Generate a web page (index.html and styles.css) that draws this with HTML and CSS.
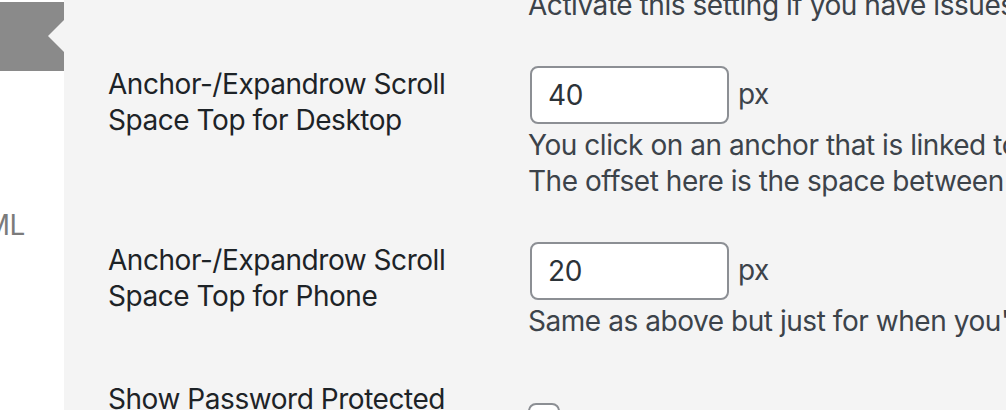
FILE: index.html
```html
<!DOCTYPE html>
<html lang="en">
<head>
<meta charset="utf-8">
<title>Settings</title>
<link rel="stylesheet" href="styles.css">
</head>
<body>
<div class="page">
  <aside class="sidebar">
    <div class="menu-current"></div>
    <div class="menu-item"><span class="menu-label">HTML</span></div>
  </aside>
  <main class="content">
    <div class="form-table">
      <div class="row row-prev">
        <div class="th"></div>
        <div class="td">
          <p class="description first">Activate this setting if you have issues with the scrolling on your page.</p>
        </div>
      </div>
      <div class="row">
        <div class="th">Anchor-/Expandrow Scroll<br>Space Top for Desktop</div>
        <div class="td">
          <div class="field">
            <input class="text-input" type="text" value="40">
            <span class="unit">px</span>
          </div>
          <p class="description">You click on an anchor that is linked to an element on the same page.<br>The offset here is the space between the top of the window and the element.</p>
        </div>
      </div>
      <div class="row">
        <div class="th">Anchor-/Expandrow Scroll<br>Space Top for Phone</div>
        <div class="td">
          <div class="field">
            <input class="text-input" type="text" value="20">
            <span class="unit">px</span>
          </div>
          <p class="description">Same as above but just for when you're on a phone.</p>
        </div>
      </div>
      <div class="row">
        <div class="th">Show Password Protected<br>Pages</div>
        <div class="td">
          <input class="checkbox" type="checkbox">
        </div>
      </div>
    </div>
  </main>
</div>
</body>
</html>
```
FILE: styles.css
```css
html, body {
  margin: 0;
  padding: 0;
}
body {
  width: 1006px;
  height: 410px;
  overflow: hidden;
  font-family: Inter, "Noto Sans", sans-serif;
  font-size: 28px;
  line-height: 36.6px;
  letter-spacing: -0.45px;
}
.page {
  display: flex;
  height: 410px;
  overflow: hidden;
}
.sidebar {
  width: 64px;
  flex-shrink: 0;
  background: #ffffff;
  overflow: hidden;
}
.menu-current {
  margin-top: 2px;
  height: 69px;
  background: #8a8a8a;
  position: relative;
}
.menu-current::after {
  content: "";
  position: absolute;
  right: 0;
  top: 18px;
  width: 0;
  height: 0;
  border-top: 16px solid transparent;
  border-bottom: 16px solid transparent;
  border-right: 16px solid #f4f4f4;
}
.menu-item {
  margin-top: 136px;
  width: 25px;
  display: flex;
  justify-content: flex-end;
  white-space: nowrap;
  color: #7b7b7b;
}
.content {
  flex: 1;
  background: #f4f4f4;
  padding-left: 44px;
  overflow: hidden;
}
.form-table {
  margin-top: -13px;
}
.row {
  display: grid;
  grid-template-columns: 420px 1fr;
}
.th {
  padding: 21px 0 0;
  color: #1d2327;
  white-space: nowrap;
}
.row-prev .th {
  padding: 0;
}
.td {
  padding: 21px 0 21px;
  min-width: 0;
}
.row-prev .td {
  padding-top: 0;
}
.field {
  display: flex;
  align-items: center;
}
.text-input {
  width: 199px;
  height: 58px;
  box-sizing: border-box;
  margin: 0 0 0 2px;
  padding: 0 16px;
  border: 2px solid #8c8f94;
  border-radius: 8px;
  background: #ffffff;
  font-family: Inter, "Noto Sans", sans-serif;
  font-size: 28px;
  letter-spacing: -0.45px;
  color: #2c3338;
  outline: none;
}
.unit {
  margin-left: 9px;
  color: #3c434a;
}
.description {
  margin: 3px 0 0;
  color: #3c434a;
  white-space: nowrap;
}
.description.first {
  margin-top: 0;
}
.checkbox {
  appearance: none;
  -webkit-appearance: none;
  display: block;
  width: 32px;
  height: 32px;
  box-sizing: border-box;
  margin: 22px 0 0 0;
  border: 2px solid #8c8f94;
  border-radius: 8px;
  background: #ffffff;
}
```
